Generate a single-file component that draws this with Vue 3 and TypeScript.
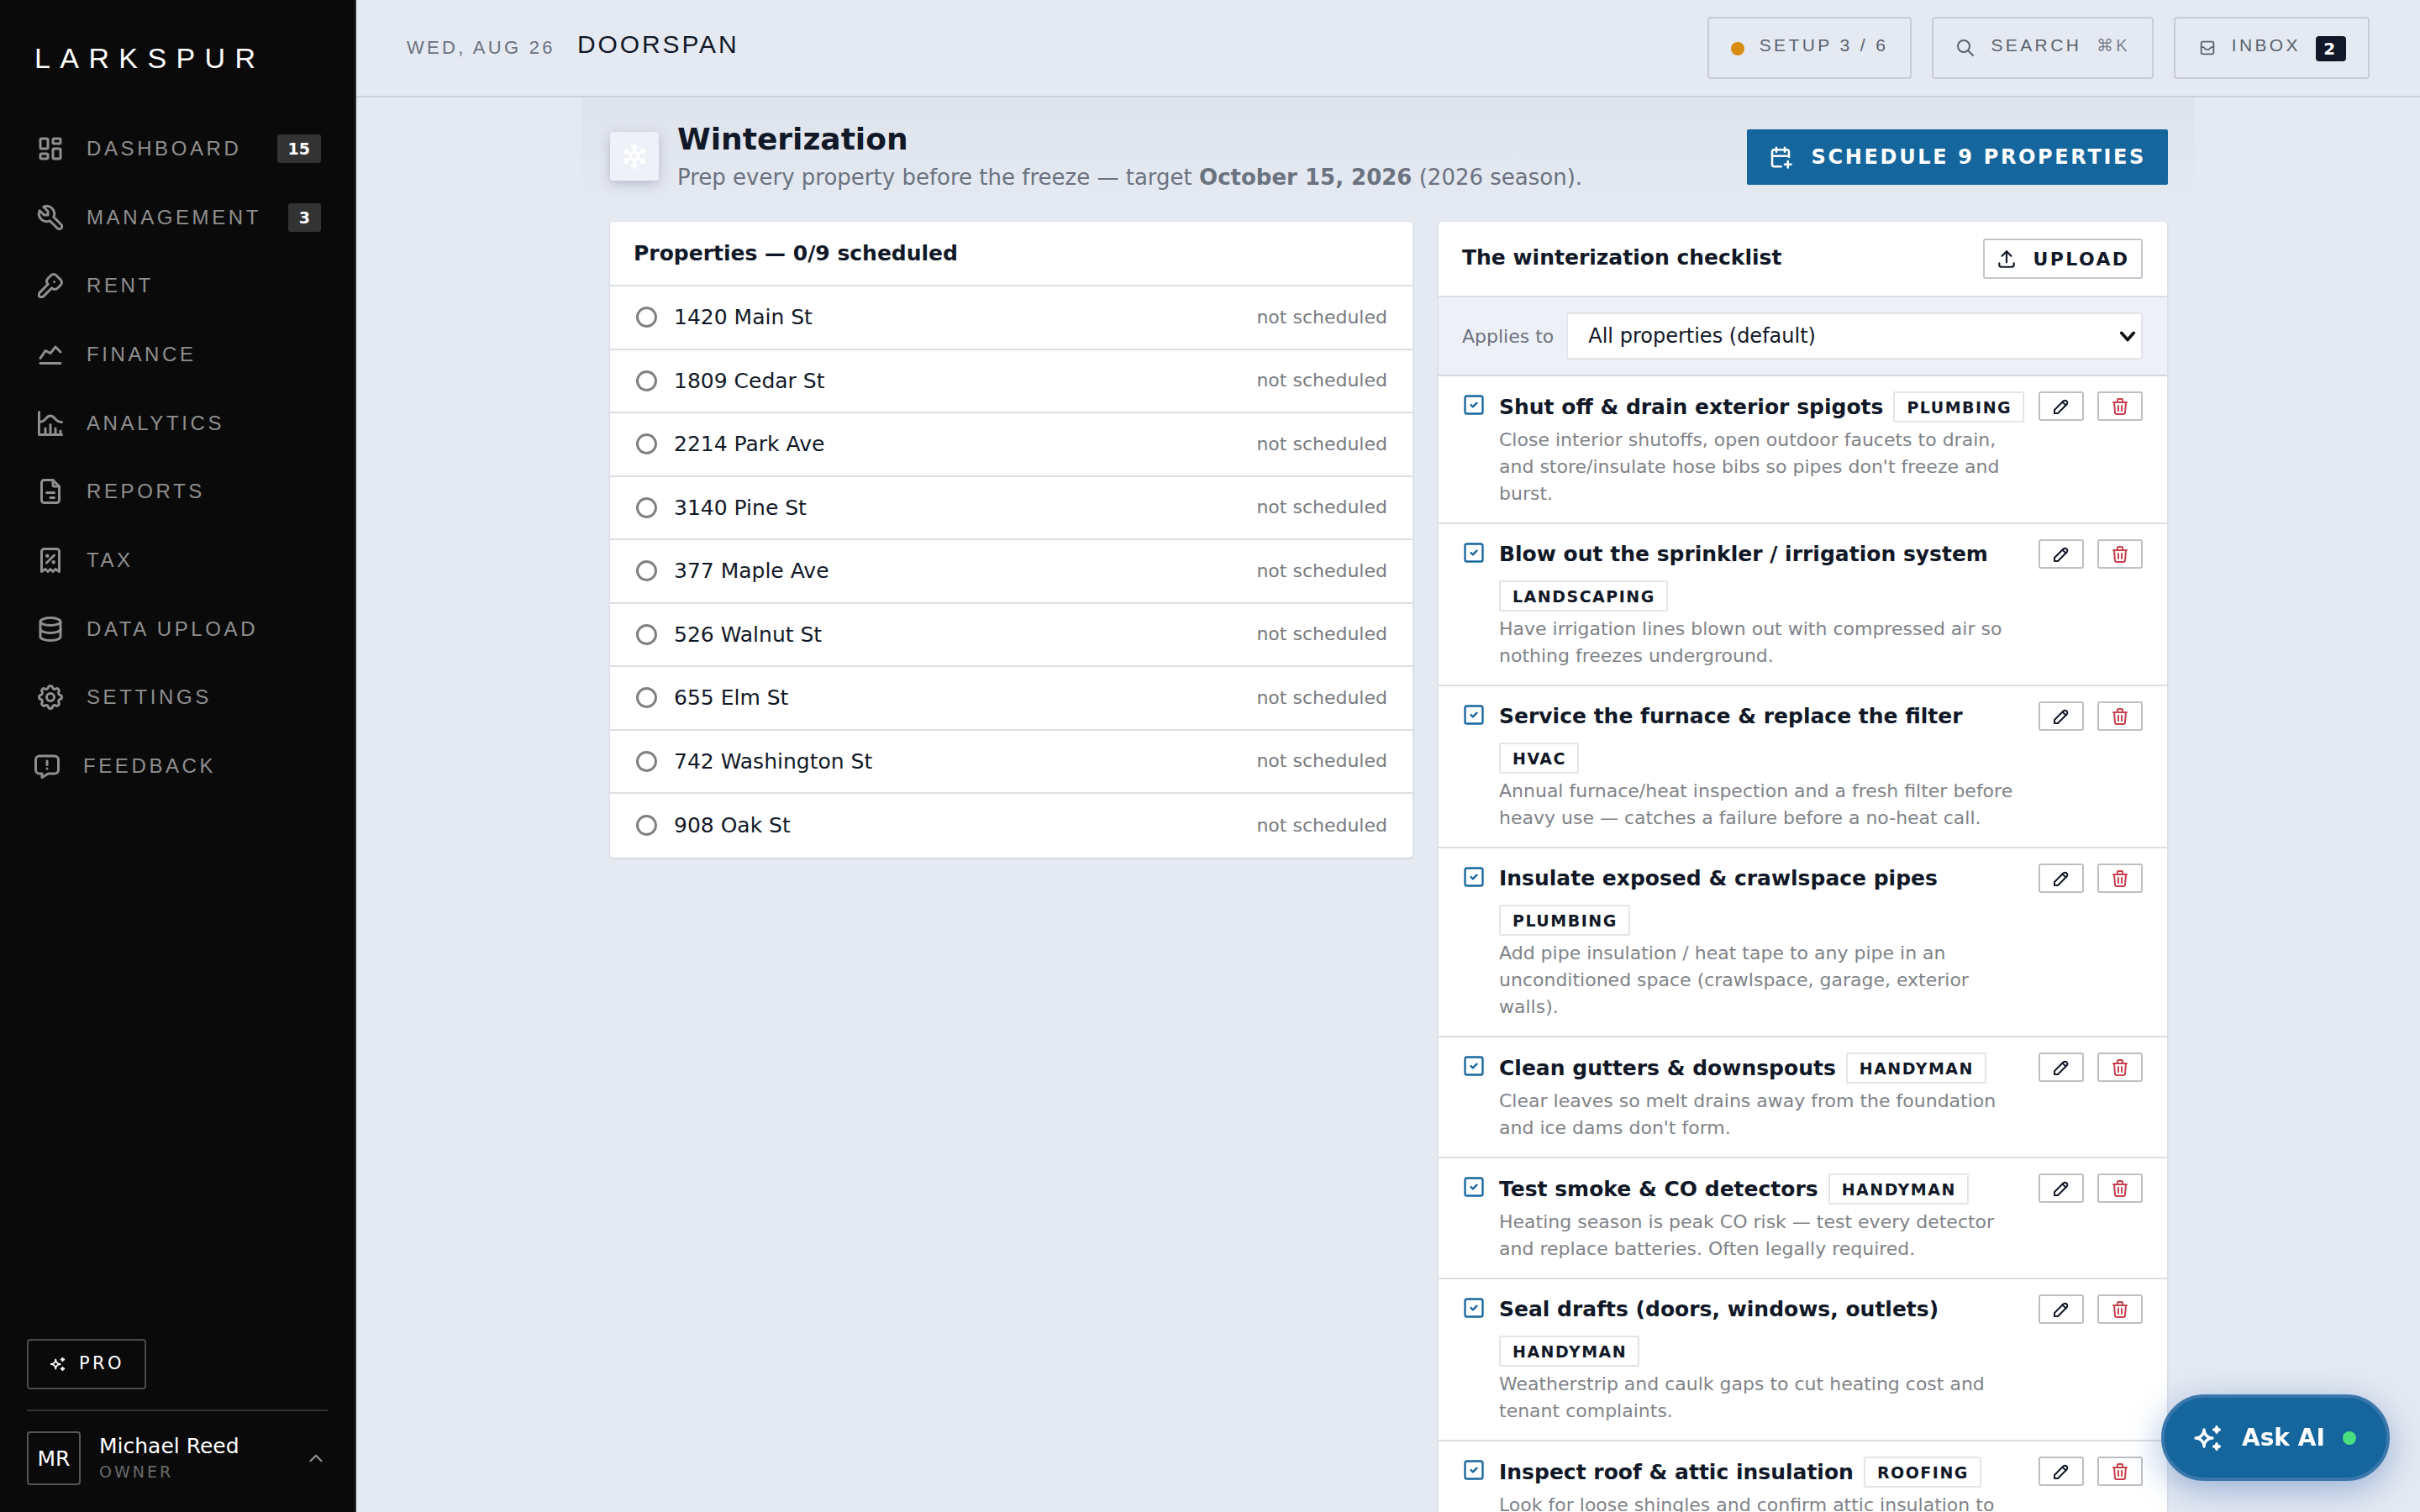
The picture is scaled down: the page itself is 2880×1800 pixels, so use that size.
<script setup lang="ts">
interface NavItem {
  label: string;
  paths: string[];
  badge?: number;
  nudge?: boolean;
}

interface Task {
  title: string;
  tag: string;
  desc: string;
}

const navItems: NavItem[] = [
  {
    label: 'Dashboard',
    badge: 15,
    paths: [
      'M5 4h4a1 1 0 0 1 1 1v6a1 1 0 0 1 -1 1h-4a1 1 0 0 1 -1 -1v-6a1 1 0 0 1 1 -1',
      'M5 16h4a1 1 0 0 1 1 1v2a1 1 0 0 1 -1 1h-4a1 1 0 0 1 -1 -1v-2a1 1 0 0 1 1 -1',
      'M15 12h4a1 1 0 0 1 1 1v6a1 1 0 0 1 -1 1h-4a1 1 0 0 1 -1 -1v-6a1 1 0 0 1 1 -1',
      'M15 4h4a1 1 0 0 1 1 1v2a1 1 0 0 1 -1 1h-4a1 1 0 0 1 -1 -1v-2a1 1 0 0 1 1 -1'
    ]
  },
  {
    label: 'Management',
    badge: 3,
    paths: ['M7 10h3v-3l-3.5 -3.5a6 6 0 0 1 8 8l6 6a2 2 0 0 1 -3 3l-6 -6a6 6 0 0 1 -8 -8l3.5 3.5']
  },
  {
    label: 'Rent',
    paths: [
      'M16.555 3.843l3.602 3.602a2.877 2.877 0 0 1 0 4.069l-2.643 2.643a2.877 2.877 0 0 1 -4.069 0l-.301 -.301l-6.558 6.558a2 2 0 0 1 -1.239 .578l-.175 .008h-1.172a1 1 0 0 1 -.993 -.883l-.007 -.117v-1.172a2 2 0 0 1 .467 -1.284l.119 -.13l6.558 -6.558l-.301 -.301a2.877 2.877 0 0 1 0 -4.069l2.643 -2.643a2.877 2.877 0 0 1 4.069 0z',
      'M15 9h.01'
    ]
  },
  { label: 'Finance', paths: ['M4 19l16 0', 'M4 15l4 -6l4 2l4 -5l4 4'] },
  {
    label: 'Analytics',
    paths: ['M3 3v18h18', 'M20 18v3', 'M16 16v5', 'M12 13v8', 'M8 16v5', 'M3 11c6 0 5 -5 9 -5s3 5 9 5']
  },
  {
    label: 'Reports',
    paths: [
      'M14 3v4a1 1 0 0 0 1 1h4',
      'M17 21h-10a2 2 0 0 1 -2 -2v-14a2 2 0 0 1 2 -2h7l5 5v11a2 2 0 0 1 -2 2z',
      'M9 13h6',
      'M12 17h3'
    ]
  },
  {
    label: 'Tax',
    paths: [
      'M9 14l6 -6',
      'M9.5 8.5m-.5 0a.5 .5 0 1 0 1 0a.5 .5 0 1 0 -1 0',
      'M14.5 13.5m-.5 0a.5 .5 0 1 0 1 0a.5 .5 0 1 0 -1 0',
      'M5 21v-16a2 2 0 0 1 2 -2h10a2 2 0 0 1 2 2v16l-3 -2l-2 2l-2 -2l-2 2l-2 -2l-3 2'
    ]
  },
  {
    label: 'Data Upload',
    paths: [
      'M12 6m-8 0a8 3 0 1 0 16 0a8 3 0 1 0 -16 0',
      'M4 6v6a8 3 0 0 0 16 0v-6',
      'M4 12v6a8 3 0 0 0 16 0v-6'
    ]
  },
  {
    label: 'Settings',
    paths: [
      'M10.325 4.317c.426 -1.756 2.924 -1.756 3.35 0a1.724 1.724 0 0 0 2.573 1.066c1.543 -.94 3.31 .826 2.37 2.37a1.724 1.724 0 0 0 1.065 2.572c1.756 .426 1.756 2.924 0 3.35a1.724 1.724 0 0 0 -1.066 2.573c.94 1.543 -.826 3.31 -2.37 2.37a1.724 1.724 0 0 0 -2.572 1.065c-.426 1.756 -2.924 1.756 -3.35 0a1.724 1.724 0 0 0 -2.573 -1.066c-1.543 .94 -3.31 -.826 -2.37 -2.37a1.724 1.724 0 0 0 -1.065 -2.572c-1.756 -.426 -1.756 -2.924 0 -3.35a1.724 1.724 0 0 0 1.066 -2.573c-.94 -1.543 .826 -3.31 2.37 -2.37c1 .608 2.296 .07 2.572 -1.065z',
      'M9 12a3 3 0 1 0 6 0a3 3 0 0 0 -6 0'
    ]
  },
  {
    label: 'Feedback',
    nudge: true,
    paths: [
      'M18 4a3 3 0 0 1 3 3v8a3 3 0 0 1 -3 3h-5l-5 3v-3h-2a3 3 0 0 1 -3 -3v-8a3 3 0 0 1 3 -3h12z',
      'M12 8v3',
      'M12 14v.01'
    ]
  }
];

const sparkles =
  'M16 18a2 2 0 0 1 2 2a2 2 0 0 1 2 -2a2 2 0 0 1 -2 -2a2 2 0 0 1 -2 2zm0 -12a2 2 0 0 1 2 2a2 2 0 0 1 2 -2a2 2 0 0 1 -2 -2a2 2 0 0 1 -2 2zm-7 12a6 6 0 0 1 6 -6a6 6 0 0 1 -6 -6a6 6 0 0 1 -6 6a6 6 0 0 1 6 6z';

const snowflake = [
  'M10 4l2 1l2 -1',
  'M12 2v6.5l3 1.72',
  'M17.928 6.268l.134 2.232l1.866 1.232',
  'M20.66 7l-5.629 3.25l.01 3.458',
  'M19.928 14.268l-1.866 1.232l-.134 2.232',
  'M20.66 17l-5.629 -3.25l-2.99 1.738',
  'M14 20l-2 -1l-2 1',
  'M12 22v-6.5l-3 -1.72',
  'M6.072 17.732l-.134 -2.232l-1.866 -1.232',
  'M3.34 17l5.629 -3.25l-.01 -3.458',
  'M4.072 9.732l1.866 -1.232l.134 -2.232',
  'M3.34 7l5.629 3.25l2.99 -1.738'
];

const properties = [
  '1420 Main St',
  '1809 Cedar St',
  '2214 Park Ave',
  '3140 Pine St',
  '377 Maple Ave',
  '526 Walnut St',
  '655 Elm St',
  '742 Washington St',
  '908 Oak St'
];

const tasks: Task[] = [
  {
    title: 'Shut off & drain exterior spigots',
    tag: 'Plumbing',
    desc: "Close interior shutoffs, open outdoor faucets to drain, and store/insulate hose bibs so pipes don't freeze and burst."
  },
  {
    title: 'Blow out the sprinkler / irrigation system',
    tag: 'Landscaping',
    desc: 'Have irrigation lines blown out with compressed air so nothing freezes underground.'
  },
  {
    title: 'Service the furnace & replace the filter',
    tag: 'HVAC',
    desc: 'Annual furnace/heat inspection and a fresh filter before heavy use — catches a failure before a no-heat call.'
  },
  {
    title: 'Insulate exposed & crawlspace pipes',
    tag: 'Plumbing',
    desc: 'Add pipe insulation / heat tape to any pipe in an unconditioned space (crawlspace, garage, exterior walls).'
  },
  {
    title: 'Clean gutters & downspouts',
    tag: 'Handyman',
    desc: "Clear leaves so melt drains away from the foundation and ice dams don't form."
  },
  {
    title: 'Test smoke & CO detectors',
    tag: 'Handyman',
    desc: 'Heating season is peak CO risk — test every detector and replace batteries. Often legally required.'
  },
  {
    title: 'Seal drafts (doors, windows, outlets)',
    tag: 'Handyman',
    desc: 'Weatherstrip and caulk gaps to cut heating cost and tenant complaints.'
  },
  {
    title: 'Inspect roof & attic insulation',
    tag: 'Roofing',
    desc: 'Look for loose shingles and confirm attic insulation to prevent ice dams.'
  }
];
</script>

<template>
  <div class="shell">
    <aside class="sidebar">
      <div class="logo">LARKSPUR</div>
      <nav class="nav">
        <a v-for="item in navItems" :key="item.label" class="nav-item" :class="{ nudge: item.nudge }">
          <svg class="nav-icon" viewBox="0 0 24 24">
            <path v-for="d in item.paths" :key="d" :d="d" />
          </svg>
          <span class="nav-label">{{ item.label }}</span>
          <span v-if="item.badge" class="nav-badge">{{ item.badge }}</span>
        </a>
      </nav>
      <div class="side-foot">
        <button class="pro-btn">
          <svg class="pro-icon" viewBox="0 0 24 24"><path :d="sparkles" /></svg>
          <span>PRO</span>
        </button>
        <div class="user">
          <div class="avatar">MR</div>
          <div class="user-text">
            <div class="user-name">Michael Reed</div>
            <div class="user-role">OWNER</div>
          </div>
          <svg class="user-chevron" viewBox="0 0 24 24"><path d="M6 15l6 -6l6 6" /></svg>
        </div>
      </div>
    </aside>

    <main class="main">
      <header class="topbar">
        <span class="date">WED, AUG 26</span>
        <span class="org">DOORSPAN</span>
        <div class="top-actions">
          <button class="top-btn">
            <span class="setup-dot"></span>
            <span class="top-label">SETUP 3 / 6</span>
          </button>
          <button class="top-btn">
            <svg class="top-icon" viewBox="0 0 24 24">
              <path d="M10 10m-7 0a7 7 0 1 0 14 0a7 7 0 1 0 -14 0" />
              <path d="M21 21l-6 -6" />
            </svg>
            <span class="top-label">SEARCH</span>
            <span class="top-label kbd">⌘K</span>
          </button>
          <button class="top-btn inbox-btn">
            <svg class="top-icon inbox" viewBox="0 0 24 24">
              <path d="M4 6a2 2 0 0 1 2 -2h12a2 2 0 0 1 2 2v12a2 2 0 0 1 -2 2h-12a2 2 0 0 1 -2 -2v-12z" />
              <path d="M4 11h3l3 3h4l3 -3h3" />
            </svg>
            <span class="top-label">INBOX</span>
            <span class="inbox-count">2</span>
          </button>
        </div>
      </header>

      <div class="content">
        <section class="page">
          <div class="page-head">
            <div class="head-icon">
              <svg viewBox="0 0 24 24"><path v-for="d in snowflake" :key="d" :d="d" /></svg>
            </div>
            <div class="head-text">
              <h1>Winterization</h1>
              <p>Prep every property before the freeze — target <b>October 15, 2026</b> (2026 season).</p>
            </div>
            <button class="schedule-btn">
              <svg viewBox="0 0 24 24">
                <path d="M12.5 21h-6.5a2 2 0 0 1 -2 -2v-12a2 2 0 0 1 2 -2h12a2 2 0 0 1 2 2v5" />
                <path d="M16 3v4" />
                <path d="M8 3v4" />
                <path d="M4 11h16" />
                <path d="M16 19h6" />
                <path d="M19 16v6" />
              </svg>
              <span>SCHEDULE 9 PROPERTIES</span>
            </button>
          </div>

          <div class="columns">
            <div class="card props">
              <div class="props-head">Properties — 0/9 scheduled</div>
              <div v-for="p in properties" :key="p" class="prop-row">
                <span class="radio"></span>
                <span class="prop-name">{{ p }}</span>
                <span class="prop-status">not scheduled</span>
              </div>
            </div>

            <div class="card checklist">
              <div class="check-head">
                <span class="check-title">The winterization checklist</span>
                <button class="upload-btn">
                  <svg viewBox="0 0 24 24">
                    <path d="M4 17v2a2 2 0 0 0 2 2h12a2 2 0 0 0 2 -2v-2" />
                    <path d="M7 9l5 -5l5 5" />
                    <path d="M12 4l0 12" />
                  </svg>
                  <span>UPLOAD</span>
                </button>
              </div>
              <div class="applies">
                <label class="applies-label">Applies to</label>
                <div class="select-wrap">
                  <select class="applies-select">
                    <option>All properties (default)</option>
                  </select>
                  <svg class="select-arrow" viewBox="0 0 24 24"><path d="M4 8l8 9l8 -9" /></svg>
                </div>
              </div>
              <div v-for="t in tasks" :key="t.title" class="task">
                <svg class="task-check" viewBox="0 0 24 24">
                  <path d="M3 5a2 2 0 0 1 2 -2h14a2 2 0 0 1 2 2v14a2 2 0 0 1 -2 2h-14a2 2 0 0 1 -2 -2z" />
                  <path d="M9 12l2 2l4 -4" />
                </svg>
                <div class="task-body">
                  <div class="task-title-row">
                    <span class="task-title">{{ t.title }}</span>
                    <span class="task-tag">{{ t.tag }}</span>
                  </div>
                  <p class="task-desc">{{ t.desc }}</p>
                </div>
                <div class="task-actions">
                  <button class="icon-btn">
                    <svg viewBox="0 0 24 24">
                      <path d="M4 20h4l10.5 -10.5a2.828 2.828 0 1 0 -4 -4l-10.5 10.5v4" />
                      <path d="M13.5 6.5l4 4" />
                    </svg>
                  </button>
                  <button class="icon-btn danger">
                    <svg viewBox="0 0 24 24">
                      <path d="M4 7l16 0" />
                      <path d="M10 11l0 6" />
                      <path d="M14 11l0 6" />
                      <path d="M5 7l1 12a2 2 0 0 0 2 2h8a2 2 0 0 0 2 -2l1 -12" />
                      <path d="M9 7v-3a1 1 0 0 1 1 -1h4a1 1 0 0 1 1 1v3" />
                    </svg>
                  </button>
                </div>
              </div>
            </div>
          </div>
        </section>
      </div>
    </main>

    <button class="ask-ai">
      <svg viewBox="0 0 24 24"><path :d="sparkles" /></svg>
      <span>Ask AI</span>
      <span class="ask-dot"></span>
    </button>
  </div>
</template>

<style>
html,
body {
  margin: 0;
  background: #e5e9f2;
}
</style>

<style scoped>
.shell {
  display: flex;
  height: 1800px;
  overflow: hidden;
  font-family: 'DejaVu Sans', sans-serif;
  color: #111827;
  background: #e5e9f2;
}

svg {
  fill: none;
  stroke: currentColor;
  stroke-width: 2;
  stroke-linecap: round;
  stroke-linejoin: round;
  flex-shrink: 0;
}

button {
  font-family: inherit;
  cursor: pointer;
}

/* sidebar */
.sidebar {
  width: 424px;
  flex-shrink: 0;
  box-sizing: border-box;
  display: flex;
  flex-direction: column;
  background: #0a0a0a;
  border-right: 2px solid #2a2a2a;
}

.logo {
  height: 136px;
  box-sizing: border-box;
  padding: 49px 0 0 41px;
  font-family: 'Liberation Sans', sans-serif;
  font-size: 34px;
  line-height: 40px;
  letter-spacing: 11.4px;
  color: #fff;
}

.nav {
  display: flex;
  flex-direction: column;
}

.nav-item {
  height: 81.7px;
  display: flex;
  align-items: center;
  padding: 0 40px 0 42px;
  color: #8f8f8f;
}

.nav-item.nudge {
  padding-left: 38px;
}

.nav-icon {
  width: 36px;
  height: 36px;
  margin-right: 25px;
}

.nav-label {
  font-family: 'Liberation Sans', sans-serif;
  font-size: 24px;
  letter-spacing: 3.6px;
  text-transform: uppercase;
}

.nav-badge {
  margin-left: auto;
  height: 34px;
  padding: 0 13px;
  display: flex;
  align-items: center;
  background: #333;
  border-radius: 3px;
  color: #fff;
  font-size: 19px;
  font-weight: 700;
}

.side-foot {
  margin-top: auto;
  padding: 0 32px 32px;
}

.pro-btn {
  width: 142px;
  height: 60px;
  display: flex;
  align-items: center;
  gap: 14px;
  padding: 0 0 3px 24px;
  box-sizing: border-box;
  background: transparent;
  border: 2px solid #4a4a4a;
  border-radius: 4px;
  color: #fff;
  font-size: 21px;
  letter-spacing: 3.4px;
}

.pro-icon {
  width: 22px;
  height: 22px;
  margin-top: 3px;
}

.user {
  margin-top: 24px;
  padding-top: 24px;
  border-top: 2px solid #333;
  display: flex;
  align-items: center;
}

.avatar {
  width: 64px;
  height: 64px;
  box-sizing: border-box;
  display: flex;
  align-items: center;
  justify-content: center;
  border: 2px solid #555;
  border-radius: 4px;
  color: #fff;
  font-size: 25px;
}

.user-text {
  margin: -3px 0 0 22px;
  flex: 1;
}

.user-name {
  font-size: 25px;
  line-height: 30px;
  margin-bottom: 4px;
  color: #fff;
}

.user-role {
  font-size: 19px;
  line-height: 22px;
  letter-spacing: 3px;
  color: #6a6a6a;
}

.user-chevron {
  width: 26px;
  height: 26px;
  color: #8f8f8f;
  margin-right: 1px;
}

/* top bar */
.main {
  flex: 1;
  min-width: 0;
  display: flex;
  flex-direction: column;
}

.topbar {
  height: 116px;
  flex-shrink: 0;
  box-sizing: border-box;
  display: flex;
  align-items: center;
  padding: 0 60px;
  border-bottom: 2px solid #cbd0da;
}

.date {
  font-family: 'Liberation Sans', sans-serif;
  font-size: 22px;
  letter-spacing: 3.3px;
  color: #6b7280;
}

.org {
  margin: 0 0 8px 26px;
  font-family: 'Liberation Sans', sans-serif;
  font-size: 30px;
  letter-spacing: 2.9px;
  color: #111827;
}

.top-actions {
  margin-left: auto;
  display: flex;
  gap: 24px;
}

.top-btn {
  height: 74px;
  display: flex;
  align-items: center;
  gap: 18px;
  padding: 0 26px;
  background: transparent;
  border: 2px solid #c8ccd6;
  border-radius: 4px;
  color: #5b6270;
  font-family: 'Liberation Sans', sans-serif;
  font-size: 21px;
  letter-spacing: 3.4px;
}

.top-btn.inbox-btn {
  padding-left: 27px;
}

.top-label {
  margin-bottom: 6px;
}

.setup-dot {
  width: 16px;
  height: 16px;
  border-radius: 50%;
  background: #d98c12;
  margin-top: 2px;
}

.top-icon {
  width: 24px;
  height: 24px;
}

.top-icon.inbox {
  width: 22px;
  height: 22px;
}

.kbd {
  font-size: 20px;
  letter-spacing: 3px;
  color: #7c828e;
}

.inbox-count {
  width: 36px;
  height: 30px;
  display: flex;
  align-items: center;
  justify-content: center;
  background: #111827;
  border-radius: 4px;
  color: #fff;
  font-family: 'DejaVu Sans', sans-serif;
  font-size: 20px;
  font-weight: 700;
  margin-top: 1px;
}

/* page */
.content {
  flex: 1;
  min-height: 0;
  overflow: hidden;
}

.page {
  width: 1920px;
  margin: 0 auto;
  box-sizing: border-box;
  padding: 0 32px 0 34px;
  background: linear-gradient(to bottom, #dfe3ec 0, #e5e9f2 130px);
}

.page-head {
  height: 148px;
  display: flex;
  align-items: flex-start;
  padding-top: 26px;
  box-sizing: border-box;
}

.head-icon {
  width: 58px;
  height: 58px;
  margin: 15px 22px 0 0;
  flex-shrink: 0;
  display: flex;
  align-items: center;
  justify-content: center;
  background: #eef1f7;
  border-radius: 4px;
  box-shadow: 0 4px 14px rgba(100, 110, 135, 0.35);
  color: #fff;
}

.head-icon svg {
  width: 34px;
  height: 34px;
}

.head-text h1 {
  margin: 2px 0 0;
  font-size: 36px;
  line-height: 44px;
  font-weight: 700;
  color: #111827;
}

.head-text p {
  margin: 5px 0 0;
  font-size: 26px;
  line-height: 36px;
  color: #6b7280;
}

.head-text b {
  font-weight: 700;
}

.schedule-btn {
  margin-left: auto;
  margin-top: 12px;
  height: 66px;
  display: flex;
  align-items: center;
  gap: 22px;
  padding: 0 26px 0 25px;
  background: #16669e;
  border: none;
  border-radius: 2px;
  color: #fff;
  font-size: 24px;
  font-weight: 700;
  letter-spacing: 2.65px;
}

.schedule-btn svg {
  width: 30px;
  height: 30px;
}

.columns {
  display: flex;
  gap: 31px;
  align-items: flex-start;
}

.card {
  background: #fff;
  border-radius: 4px;
  box-shadow: 0 1px 3px rgba(17, 24, 39, 0.14);
}

.props {
  width: 955px;
  flex-shrink: 0;
}

.props-head {
  height: 77px;
  box-sizing: border-box;
  padding-left: 28px;
  display: flex;
  align-items: center;
  border-bottom: 2px solid #dcdee3;
  font-size: 25px;
  font-weight: 700;
}

.prop-row {
  height: 75.5px;
  box-sizing: border-box;
  display: flex;
  align-items: center;
  padding: 0 30px 0 31px;
  border-bottom: 2px solid #dcdee3;
}

.prop-row:last-child {
  border-bottom: none;
}

.radio {
  width: 25px;
  height: 25px;
  box-sizing: border-box;
  border: 3px solid #808080;
  border-radius: 50%;
}

.prop-name {
  margin-left: 20px;
  font-size: 25px;
}

.prop-status {
  margin: 0 0 1px auto;
  font-size: 22px;
  color: #777b80;
}

.checklist {
  width: 867px;
  flex-shrink: 0;
}

.check-head {
  height: 90px;
  box-sizing: border-box;
  display: flex;
  align-items: center;
  justify-content: space-between;
  padding: 0 29px 0 28px;
  border-bottom: 2px solid #dcdee3;
}

.check-title {
  font-size: 25px;
  font-weight: 700;
  margin-bottom: 4px;
}

.upload-btn {
  width: 190px;
  height: 48px;
  display: flex;
  align-items: center;
  justify-content: center;
  gap: 18px;
  background: #fff;
  border: 2px solid #c4c6cc;
  border-radius: 3px;
  color: #111827;
  font-size: 22px;
  font-weight: 700;
  letter-spacing: 2.4px;
}

.upload-btn svg {
  width: 26px;
  height: 26px;
}

.applies {
  height: 94px;
  box-sizing: border-box;
  display: flex;
  align-items: center;
  gap: 15px;
  padding: 0 29px 0 28px;
  background: #edf0f6;
  border-bottom: 2px solid #d4d6dc;
}

.applies-label {
  font-size: 22px;
  color: #6b7280;
}

.select-wrap {
  flex: 1;
  position: relative;
  display: flex;
}

.applies-select {
  flex: 1;
  height: 56px;
  padding: 0 0 0 24px;
  appearance: none;
  background: #fff;
  border: 2px solid #e3e5ea;
  border-radius: 3px;
  color: #111827;
  font-family: inherit;
  font-size: 24px;
}

.select-arrow {
  position: absolute;
  right: 7px;
  top: 17px;
  width: 22px;
  height: 22px;
  stroke-width: 4;
  color: #111;
  pointer-events: none;
}

.task {
  display: flex;
  align-items: flex-start;
  padding: 18px 29px 18px 28px;
  border-bottom: 2px solid #dcdee3;
}

.task-check {
  width: 28px;
  height: 28px;
  margin: 2px 16px 0 0;
  color: #16669e;
}

.task-body {
  flex: 1;
  min-width: 0;
}

.task-title-row {
  display: flex;
  flex-wrap: wrap;
  align-items: center;
  gap: 13px 12px;
}

.task-title {
  font-size: 25px;
  line-height: 36px;
  font-weight: 700;
}

.task-tag {
  height: 37px;
  box-sizing: border-box;
  display: flex;
  align-items: center;
  padding: 0 13px 0 14px;
  background: #fff;
  border: 2px solid #e3e5ea;
  border-radius: 2px;
  font-size: 19px;
  font-weight: 700;
  letter-spacing: 1.5px;
  text-transform: uppercase;
}

.task-desc {
  margin: 5px 0 0;
  font-size: 22px;
  line-height: 32px;
  color: #7f8388;
}

.task-actions {
  margin-left: 16px;
  display: flex;
  gap: 16px;
}

.icon-btn {
  width: 54px;
  height: 35px;
  padding: 0;
  display: flex;
  align-items: center;
  justify-content: center;
  background: #fff;
  border: 2px solid #bdbfc5;
  border-radius: 3px;
  color: #111827;
}

.icon-btn.danger {
  color: #c8404a;
}

.icon-btn svg {
  width: 24px;
  height: 24px;
}

/* floating button */
.ask-ai {
  position: fixed;
  left: 2572px;
  top: 1660px;
  width: 272px;
  height: 103px;
  box-sizing: border-box;
  display: flex;
  align-items: center;
  padding-left: 32px;
  background: #16669e;
  border: 4px solid #3a77aa;
  border-radius: 52px;
  box-shadow: 0 10px 40px rgba(30, 90, 170, 0.4);
  color: #fff;
  font-size: 28px;
  font-weight: 700;
}

.ask-ai svg {
  width: 40px;
  height: 40px;
  margin-right: 20px;
}

.ask-dot {
  width: 16px;
  height: 16px;
  margin-left: 21px;
  border-radius: 50%;
  background: #4ade80;
}
</style>
